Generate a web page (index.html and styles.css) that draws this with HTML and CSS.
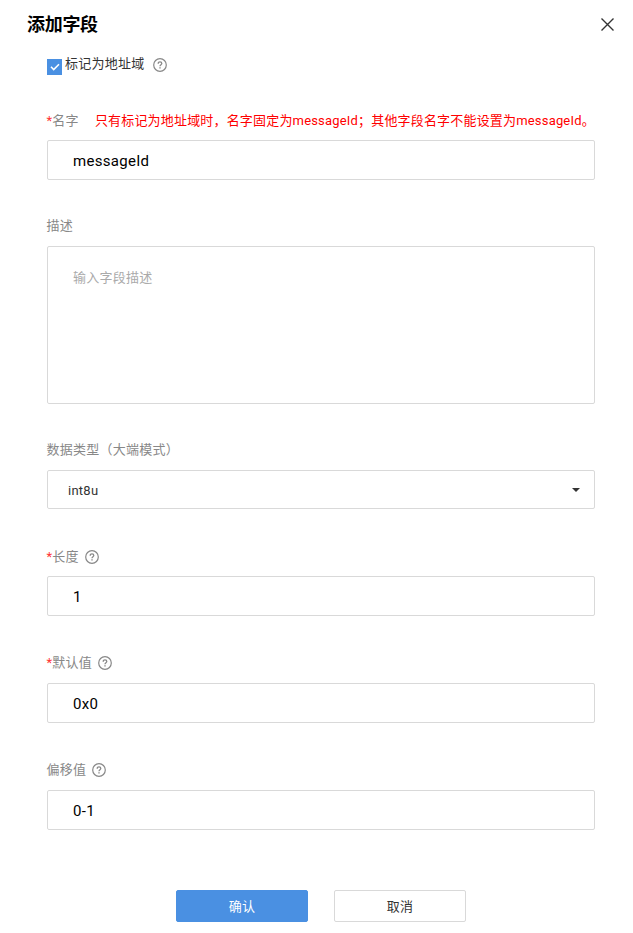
FILE: index.html
```html
<!DOCTYPE html>
<html lang="zh-CN">
<head>
  <meta charset="UTF-8">
  <meta name="viewport" content="width=device-width, initial-scale=1.0">
  <title>添加字段</title>
  <link rel="stylesheet" href="styles.css">
</head>
<body>
  <svg class="icon-defs" width="0" height="0">
    <symbol id="icon-help" viewBox="0 0 14 14">
      <circle cx="7" cy="7" r="6.3" fill="none" stroke="currentColor" stroke-width="1.2"/>
      <path d="M5.2 5.7C5.2 4.5 6 3.9 7 3.9s1.8.6 1.8 1.6C8.8 6.7 7 6.7 7 8.2" fill="none" stroke="currentColor" stroke-width="1.3"/>
      <path d="M6.3 9.2h1.4v1.3H6.3z" fill="currentColor"/>
    </symbol>
  </svg>

  <div class="dialog">
    <div class="dialog-header">
      <h2>添加字段</h2>
      <button class="btn-close" type="button" aria-label="关闭">
        <svg width="13" height="13" viewBox="0 0 13 13"><path d="M.5.5l12 12M12.5.5l-12 12" stroke="#333" stroke-width="1.4"/></svg>
      </button>
    </div>

    <form class="dialog-body">
      <label class="check-row">
        <span class="checkbox">
          <svg width="10" height="8" viewBox="0 0 10 8"><path d="M1 3.8l2.7 2.7L9 1.3" fill="none" stroke="#fff" stroke-width="1.6"/></svg>
        </span>
        <span class="check-text">标记为地址域</span>
        <svg class="icon-help"><use href="#icon-help"/></svg>
      </label>

      <div class="form-group">
        <label class="label-low" for="name"><span class="required">*</span>名字<span class="name-tip">只有标记为地址域时，名字固定为messageId；其他字段名字不能设置为messageId。</span></label>
        <input type="text" id="name" value="messageId">
      </div>

      <div class="form-group">
        <label for="desc">描述</label>
        <textarea id="desc" placeholder="输入字段描述"></textarea>
      </div>

      <div class="form-group">
        <label>数据类型（大端模式）</label>
        <div class="select">
          <span>int8u</span>
          <span class="caret"></span>
        </div>
      </div>

      <div class="form-group">
        <label class="label-low" for="length"><span class="required">*</span>长度<svg class="icon-help"><use href="#icon-help"/></svg></label>
        <input type="text" id="length" value="1">
      </div>

      <div class="form-group">
        <label for="default"><span class="required">*</span>默认值<svg class="icon-help"><use href="#icon-help"/></svg></label>
        <input type="text" id="default" value="0x0">
      </div>

      <div class="form-group">
        <label for="offset">偏移值<svg class="icon-help"><use href="#icon-help"/></svg></label>
        <input type="text" id="offset" value="0-1">
      </div>

      <div class="button-group">
        <button class="btn btn-primary" type="button">确认</button>
        <button class="btn btn-secondary" type="button">取消</button>
      </div>
    </form>
  </div>
</body>
</html>
```
FILE: styles.css
```css
* {
  box-sizing: border-box;
}

body {
  margin: 0;
  background: #fff;
  color: #333;
  font-family: Roboto, "Noto Sans CJK SC", sans-serif;
  font-size: 13px;
  letter-spacing: 0.25px;
}

.icon-defs {
  display: block;
}

.dialog {
  height: 933px;
  overflow: hidden;
}

.dialog-header {
  display: flex;
  justify-content: space-between;
  align-items: center;
  height: 48px;
  padding: 0 19px 0 27px;
}

h2 {
  margin: 0;
  padding-top: 1px;
  color: #000;
  font-size: 18px;
  line-height: 24px;
  letter-spacing: -0.3px;
}

.btn-close {
  display: flex;
  padding: 0;
  border: none;
  background: none;
}

.dialog-body {
  padding: 6px 38px 0 47px;
}

.check-row {
  display: flex;
  align-items: center;
  height: 20px;
  margin-bottom: 36px;
}

.checkbox {
  display: flex;
  align-items: center;
  justify-content: center;
  width: 15px;
  height: 16px;
  margin: 5px 3px 0 0;
  background: #4a90e2;
}

.check-text {
  line-height: 20px;
}

.icon-help {
  flex: none;
  width: 14px;
  height: 14px;
  margin-left: 6px;
  color: #888;
}

.check-row .icon-help {
  margin: 1px 0 0 8px;
}

.form-group {
  margin-bottom: 37px;
}

.form-group:nth-of-type(-n+2) {
  margin-bottom: 36px;
}

.form-group label {
  display: flex;
  align-items: center;
  height: 20px;
  margin: 0 0 10px -0.5px;
  color: #888;
  line-height: 20px;
  white-space: nowrap;
}

.form-group .label-low {
  padding-top: 1px;
}

.required {
  color: #f33;
}

.name-tip {
  margin-left: 16px;
  color: #f00;
  letter-spacing: 0.18px;
}

input,
textarea,
.select {
  display: block;
  width: 100%;
  border: 1px solid #d9d9d9;
  border-radius: 2px;
  background: #fff;
  outline: none;
}

input {
  height: 40px;
  padding: 1px 25px 0;
  color: #000;
  font: 15px Roboto, "Noto Sans CJK SC", sans-serif;
  letter-spacing: 0.3px;
}

textarea {
  height: 158px;
  padding: 21px 25px;
  font: 13px/20px Roboto, "Noto Sans CJK SC", sans-serif;
  letter-spacing: 0.25px;
  resize: none;
}

textarea::placeholder {
  color: #aaa;
}

.select {
  display: flex;
  align-items: center;
  justify-content: space-between;
  height: 39px;
  padding: 0 14px 0 20px;
}

.select span:first-child {
  padding-top: 2px;
}

.caret {
  border: 4.5px solid transparent;
  border-top-color: #333;
  border-bottom: none;
}

.button-group {
  display: flex;
  gap: 26px;
  margin: 60px 0 0 129px;
}

.btn {
  width: 132px;
  height: 32px;
  padding: 0 0 2px;
  border: 1px solid #d9d9d9;
  border-radius: 2px;
  background: #fff;
  color: #333;
  font: 13px Roboto, "Noto Sans CJK SC", sans-serif;
  letter-spacing: 0.25px;
}

.btn-primary {
  border-color: #4a90e2;
  background: #4a90e2;
  color: #fff;
}
```
